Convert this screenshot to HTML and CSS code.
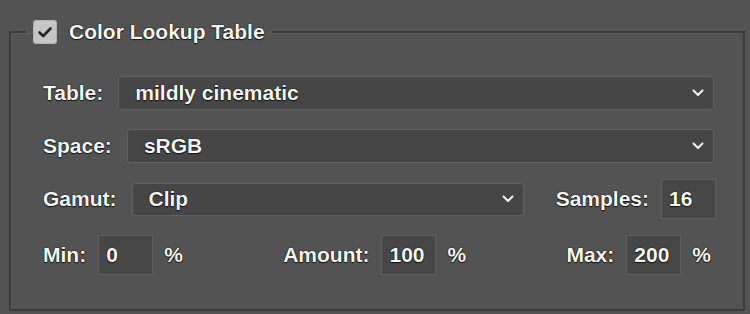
FILE: index.html
```html
<!DOCTYPE html>
<html>
<head>
<meta charset="utf-8">
<link rel="stylesheet" href="styles.css">
</head>
<body>
<fieldset class="panel">
  <legend class="panel-title">
    <span class="checkbox">
      <svg width="24" height="24" viewBox="0 0 24 24"><path d="M6.5 12.5 L10.2 16 L17.5 8.5" fill="none" stroke="#262626" stroke-width="2.6" stroke-linecap="round" stroke-linejoin="round"/></svg>
    </span>
    <span class="title-text">Color Lookup Table</span>
  </legend>
  <div class="content">
    <div class="row row-table">
      <span class="label">Table:</span>
      <div class="select"><span class="select-value">mildly cinematic</span><svg class="chev" width="12" height="8" viewBox="0 0 12 8"><path d="M1.5 1.5 L6 6 L10.5 1.5" fill="none" stroke="#f2f2f2" stroke-width="2.2" stroke-linecap="round" stroke-linejoin="round"/></svg></div>
    </div>
    <div class="row row-space">
      <span class="label">Space:</span>
      <div class="select"><span class="select-value">sRGB</span><svg class="chev" width="12" height="8" viewBox="0 0 12 8"><path d="M1.5 1.5 L6 6 L10.5 1.5" fill="none" stroke="#f2f2f2" stroke-width="2.2" stroke-linecap="round" stroke-linejoin="round"/></svg></div>
    </div>
    <div class="row row-gamut">
      <span class="label">Gamut:</span>
      <div class="select select-short"><span class="select-value">Clip</span><svg class="chev" width="12" height="8" viewBox="0 0 12 8"><path d="M1.5 1.5 L6 6 L10.5 1.5" fill="none" stroke="#f2f2f2" stroke-width="2.2" stroke-linecap="round" stroke-linejoin="round"/></svg></div>
      <span class="label label-samples">Samples:</span>
      <div class="field">16</div>
    </div>
    <div class="row row-range">
      <div class="group"><span class="label">Min:</span><div class="field">0</div><span class="unit">%</span></div>
      <div class="group"><span class="label">Amount:</span><div class="field">100</div><span class="unit">%</span></div>
      <div class="group"><span class="label">Max:</span><div class="field">200</div><span class="unit">%</span></div>
    </div>
  </div>
</fieldset>
</body>
</html>
```

FILE: styles.css
```css
html, body {
  margin: 0;
  padding: 0;
  background: #535353;
  width: 750px;
  height: 314px;
  overflow: hidden;
}
body {
  font-family: "Liberation Sans", Arial, sans-serif;
  font-weight: bold;
  font-size: 21px;
  color: #f6f6f6;
  text-shadow: 0 0 1px #000, 0 0 1px #000, 0 1px 1px rgba(0,0,0,0.7);
}
.panel {
  margin: 20px 5px 0 9px;
  padding: 0;
  border: 2px solid #3b3b3b;
  box-shadow: inset 1px 1px 0 #5c5c5c;
  min-width: 0;
}
.panel-title {
  margin-left: 15px;
  padding: 0 7px;
  display: flex;
  align-items: center;
  gap: 12px;
  height: 24px;
}
.checkbox {
  width: 24px;
  height: 24px;
  border-radius: 4px;
  background: #c6c6c6;
  display: block;
  box-shadow: inset 0 0 0 1px #b0b0b0;
}
.checkbox svg { display: block; }
.title-text {
  line-height: 24px;
}
.content {
  padding: 32px 29px 34px 32px;
  display: flex;
  flex-direction: column;
  gap: 16px;
}
.row {
  display: flex;
  align-items: center;
}
.row-table { margin-bottom: 3px; }
.label {
  white-space: nowrap;
}
.select {
  flex: 1;
  height: 34px;
  box-sizing: border-box;
  background: #464646;
  border: 1px solid #616161;
  border-radius: 3px;
  display: flex;
  align-items: center;
  padding: 0 9px 0 16px;
  margin-left: 15px;
}
.row-gamut .select { height: 33px; }
.select-value { flex: 1; }
.chev { display: block; filter: drop-shadow(0 0 0.6px #000); }
.label-samples { margin-left: 32px; }
.field {
  width: 55px;
  height: 40px;
  box-sizing: border-box;
  background: #474747;
  border: 1px solid #5f5f5f;
  display: flex;
  align-items: center;
  padding-left: 7px;
  margin-left: 12px;
}
.row-gamut .field { margin-right: -2px; }
.row-range {
  justify-content: space-between;
  padding-right: 3px;
}
.group {
  display: flex;
  align-items: center;
}
.unit { margin-left: 11px; }
```
